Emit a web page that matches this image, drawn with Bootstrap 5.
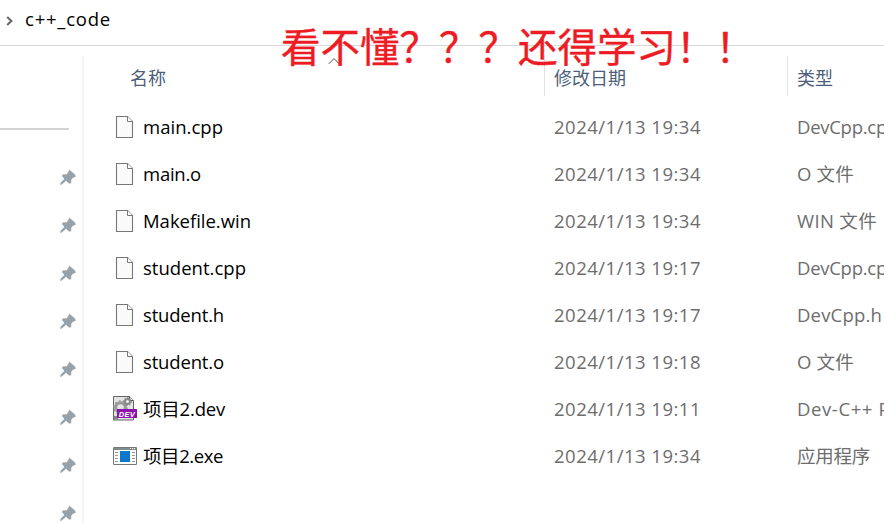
<!DOCTYPE html>
<html lang="zh-CN">
<head>
<meta charset="utf-8">
<title>c++_code</title>
<link href="https://cdn.jsdelivr.net/npm/bootstrap@5.3.0/dist/css/bootstrap.min.css" rel="stylesheet">
<style>
body{width:884px;height:523px;font-family:"Open Sans","Noto Sans CJK SC",sans-serif;font-size:18px;line-height:24px;color:#000}
.address{height:46px;border-bottom:1px solid #d9d9d9;padding:0 0 7px 6px}
.address svg{margin-right:12px}
.t{font-size:18.5px}
.side{width:82px;padding-top:10px}
.rule{height:2px;width:69px;background:#d4d4d4;margin-top:72px;margin-bottom:23px}
.pin{height:48px;padding-right:6px}
.files{border-left:2px solid #f5f5f5;margin-top:10px;min-width:0;overflow:hidden}
.line{display:grid;grid-template-columns:460px 243px 1fr;white-space:nowrap;height:47px}
.line>div{min-width:0}
.heads{color:#4c607a;height:48px}
.heads>div{height:40px;padding-top:3px}
.heads>div+div{border-left:1px solid #e3e3e3;padding-left:9px}
.title{padding-left:46px}
#rows{margin-top:-1px}
.entry{padding-left:29px}
.entry svg{margin-right:6px;flex:none}
.meta{color:#6d6d6d;padding-left:10px}
.note{left:281px;top:15px;font:39.5px/60px "Noto Sans CJK SC",sans-serif;color:#ed1c24;-webkit-text-stroke:.4px #ed1c24;white-space:nowrap}
.sorted{left:328px;top:57px}
.t{display:inline-block}
</style>
</head>
<body class="bg-white position-relative overflow-hidden d-flex flex-column">
<svg width="0" height="0" class="position-absolute">
<symbol id="doc" viewBox="0 0 24 24"><path d="M3.500 1.500h11l5 5v16h-16z" fill="#fafafa" stroke="#777" stroke-width="1.100"/><path d="M14.500 1.500v5h5" fill="#fff" stroke="#777"/></symbol>
<symbol id="pin" viewBox="0 0 16 16"><path d="M9.200.5 15.500 6v2l-2.700.8-1.600 2.200v3.200L9 14.500l-3-2.700L1.600 15.800.3 15.700.4 14 4.300 10 2 7l.5-1.600 4.200-.2L8.300 3z" fill="#97a2ab"/></symbol>
</svg>
<header class="address d-flex align-items-center flex-shrink-0">
<svg width="7" height="10" viewBox="0 0 7 10" class="mt-1"><path d="M1.200 1 5.400 5 1.200 9" fill="none" stroke="#666" stroke-width="2"/></svg>
<span class="t" data-w="86">c++_code</span>
</header>
<div class="d-flex flex-grow-1">
<aside class="side flex-shrink-0">
<div class="rule"></div>
<div id="pins"></div>
</aside>
<main class="files flex-grow-1">
<div class="line heads"><div class="title d-flex align-items-center">名称</div><div class="d-flex align-items-center">修改日期</div><div class="d-flex align-items-center">类型</div></div>
<div id="rows"></div>
</main>
</div>
<svg class="sorted position-absolute" width="12" height="8" viewBox="0 0 12 8"><path d="M.8 6.800 6 1.600l5.200 5.200" fill="none" stroke="#555"/></svg>
<div class="note position-absolute">看不懂？？？还得学习！！</div>
<template id="i-doc"><svg width="24" height="24"><use href="#doc"/></svg></template>
<template id="i-dev"><svg width="24" height="25" viewBox="0 0 24 25"><path d="M.5.5h16l4 4v19.500h-20z" fill="#e4e4e4" stroke="#666"/><path d="M16.500.5v4h4" fill="#fff" stroke="#555"/><circle cx="7.500" cy="11.500" r="4.800" fill="none" stroke="#999" stroke-width="3"/><circle cx="7.500" cy="11.500" r="6.500" fill="none" stroke="#999" stroke-width="1.500" stroke-dasharray="2 2"/><circle cx="14.500" cy="5.500" r="2.500" fill="#eee" stroke="#888" stroke-width="2"/><circle cx="14.500" cy="5.500" r="4" fill="none" stroke="#888" stroke-dasharray="1.500 1.500"/><path d="M1 20h4v3.500H1z" fill="#888"/><path d="M4 13h20v9H4z" fill="#8c12ae"/><text x="5.800" y="20.700" font-family="Liberation Sans" font-size="7.500" font-weight="bold" font-style="italic" fill="#fff" textLength="16">DEV</text></svg></template>
<template id="i-exe"><svg width="24" height="18" viewBox="0 0 24 18"><path d="M.5.5h23v17H.5z" fill="#fff" stroke="#777"/><path d="M1 1h22v2H1z" fill="#808b8c"/><path d="M17 1.500h1m1 0h1m1 0h1" stroke="#fff"/><path d="M2 5.500h3M2 8.500h3M2 11.500h3M2 14.500h3M19 5.500h3M19 8.500h3M19 11.500h3M19 14.500h3" stroke="#999"/><path d="M7 4h10v11H7z" fill="#0d78ca"/></svg></template>
<script src="https://cdn.jsdelivr.net/npm/bootstrap@5.3.0/dist/js/bootstrap.bundle.min.js"></script>
<script>
const files=[
["doc","main.cpp",80,"19:34","DevCpp.cpp",101],
["doc","main.o",58,"19:34","O 文件",57],
["doc","Makefile.win",108,"19:34","WIN 文件",80],
["doc","student.cpp",103,"19:17","DevCpp.cpp",101],
["doc","student.h",81,"19:17","DevCpp.h",85],
["doc","student.o",81,"19:18","O 文件",57],
["dev","项目2.dev",82,"19:11","Dev-C++ Project File",183],
["exe","项目2.exe",80,"19:34","应用程序",73]];
document.getElementById("rows").innerHTML=files.map(([i,n,w,t,k,kw])=>`<div class="line align-items-center"><div class="entry d-flex align-items-center">${document.getElementById("i-"+i).innerHTML}<span class="t" data-w="${w}">${n}</span></div><div class="meta"><span class="t" data-w="147">2024/1/13 ${t}</span></div><div class="meta"><span class="t" data-w="${kw}">${k}</span></div></div>`).join("");
document.getElementById("pins").innerHTML=Array(8).fill('<div class="pin d-flex align-items-center justify-content-end"><svg width="16" height="16"><use href="#pin"/></svg></div>').join("");
document.querySelectorAll("[data-w]").forEach(e=>{e.style.letterSpacing=(e.dataset.w-e.getBoundingClientRect().width)/e.textContent.length+"px"});
</script>
</body>
</html>
